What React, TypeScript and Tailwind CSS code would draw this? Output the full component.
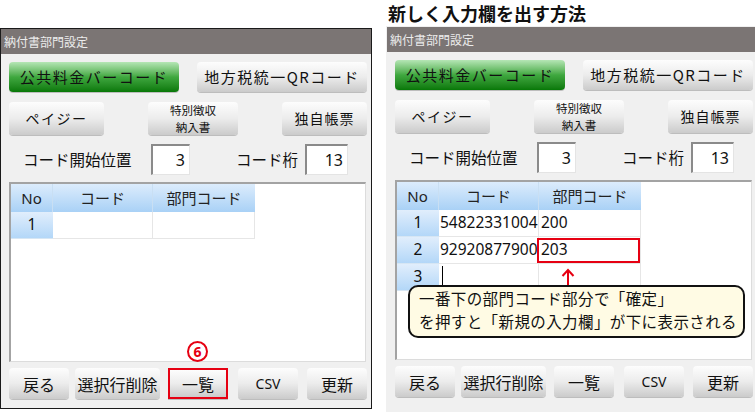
import React from 'react';

const jp = "font-['Noto_Sans_CJK_JP','Noto_Sans',sans-serif]";
const num = "font-['Noto_Sans','Noto_Sans_CJK_JP',sans-serif]";

type BtnProps = {
  children: React.ReactNode;
  className?: string;
  green?: boolean;
};

function Btn({ children, className = '', green = false }: BtnProps) {
  const tone = green
    ? 'bg-linear-to-b from-[#b5e6b5] via-[#3fa83f] to-[#067806]'
    : 'bg-linear-to-b from-[#fdfdfd] via-[#ececec] to-[#cbcbcb]';
  return (
    <div
      className={`flex items-center justify-center rounded-[4px] text-[#111] shadow-[0_1px_0_#bdbdbd] ${tone} ${className}`}
    >
      {children}
    </div>
  );
}

type Row = { code: string; dept: string };

function Grid({ rows, extra, overlay }: { rows: Row[]; extra?: boolean; overlay?: React.ReactNode }) {
  const head = 'bg-linear-to-b from-[#dcecfc] to-[#a9d1f6]';
  const numCell = 'bg-linear-to-b from-[#e1eefc] to-[#b3d7f8]';
  return (
    <div className="relative mt-[7px] ml-[8px] h-[180px] w-[357px] border-t-2 border-l-2 border-t-[#a3a3a3] border-l-[#a3a3a3] border-r border-b border-r-[#dcdcdc] border-b-[#dcdcdc] bg-white">
      <div className={`flex h-[28px] ${jp} text-[15px] text-[#222]`}>
        <div className={`flex w-[42px] items-center justify-center border-r border-[#c9dff3] ${head} ${num}`}>No</div>
        <div className={`flex w-[100px] items-center justify-center border-r border-[#c9dff3] ${head}`}>コード</div>
        <div className={`flex w-[102px] items-center justify-center ${head}`}>部門コード</div>
      </div>
      {rows.map((r, i) => (
        <div key={i} className={`flex h-[27px] ${num} text-[15.5px] text-[#111]`}>
          <div className={`flex w-[42px] items-center justify-center border-b border-[#d6e6f4] ${numCell}`}>{i + 1}</div>
          <div className="flex w-[100px] items-center border-r border-b border-[#e6e6e6] pl-[1px]">{r.code}</div>
          <div className="flex w-[102px] items-center border-r border-b border-[#e6e6e6] pl-[2px]">{r.dept}</div>
        </div>
      ))}
      {extra && (
        <div className={`flex h-[27px] ${num} text-[15.5px] text-[#111]`}>
          <div className={`flex w-[42px] items-center justify-center border-b border-[#d6e6f4] ${numCell}`}>{rows.length + 1}</div>
          <div className="flex w-[100px] items-center border-r border-b border-[#e6e6e6] pl-[3px]">
            <span className="h-[22px] w-px bg-black" />
          </div>
          <div className="w-[102px] border-r border-b border-[#e6e6e6]" />
        </div>
      )}
      {overlay}
    </div>
  );
}

function Panel({ framed, rows, extra, mark, overlay }: { framed?: boolean; rows: Row[]; extra?: boolean; mark?: boolean; overlay?: React.ReactNode }) {
  return (
    <div
      className={`relative flex h-[381px] w-[372px] shrink-0 flex-col bg-[#f0f0f0] ${jp} ${
        framed ? 'border border-[#1a1a1a]' : 'border border-transparent'
      }`}
    >
      <div className="flex h-[25px] items-center bg-[#7b7574] pl-[3px] text-[12px] text-[#ececec]">納付書部門設定</div>

      <div className="mt-[8px] flex h-[30px] pl-[8px]">
        <Btn green className="w-[170px] text-[15px] tracking-[1.5px]">公共料金バーコード</Btn>
        <Btn className="ml-[18px] w-[170px] text-[15px] tracking-[1.5px]">地方税統一QRコード</Btn>
      </div>

      <div className="mt-[10px] flex h-[33px] pl-[8px]">
        <Btn className="w-[95px] text-[14px] tracking-[1.5px]">ペイジー</Btn>
        <Btn className="ml-[44px] w-[90px] flex-col text-[11.5px] leading-[16.7px]">
          <span>特別徴収</span>
          <span>納入書</span>
        </Btn>
        <Btn className="ml-[44px] w-[85px] text-[14px] tracking-[1px]">独自帳票</Btn>
      </div>

      <div className="mt-[9px] flex h-[31px] items-center pl-[22px] text-[15.5px] text-[#111]">
        <span className="w-[128px]">コード開始位置</span>
        <div className={`flex h-[31px] w-[39px] items-center justify-end border-t-2 border-l-2 border-t-[#8a8a8a] border-l-[#8a8a8a] border-r border-b border-r-[#e4e4e4] border-b-[#e4e4e4] bg-white pr-[4px] ${num} text-[16px]`}>3</div>
        <span className="ml-[46px] w-[69px]">コード桁</span>
        <div className={`flex h-[31px] w-[43px] items-center justify-end border-t-2 border-l-2 border-t-[#8a8a8a] border-l-[#8a8a8a] border-r border-b border-r-[#e4e4e4] border-b-[#e4e4e4] bg-white pr-[4px] ${num} text-[16px]`}>13</div>
      </div>

      <Grid rows={rows} extra={extra} overlay={overlay} />

      <div className="mt-[6px] flex h-[31px] pl-[8px] text-[16px]">
        <Btn className="w-[60px]">戻る</Btn>
        <Btn className="ml-[6px] w-[85px]">選択行削除</Btn>
        <div className="relative ml-[8px]">
          <Btn className={`h-[31px] w-[60px] ${mark ? 'rounded-none border-2 border-[#e60012]' : ''}`}>一覧</Btn>
          {mark && (
            <span className={`absolute top-[-27px] left-[19px] flex h-[21px] w-[21px] items-center justify-center rounded-full border-[2.5px] border-[#e60012] bg-white text-[14px] leading-none font-bold text-[#e60012] ${num}`}>
              6
            </span>
          )}
        </div>
        <Btn className={`ml-[10px] w-[60px] text-[14px] ${num}`}>CSV</Btn>
        <Btn className="ml-[9px] w-[60px]">更新</Btn>
      </div>
    </div>
  );
}

export default function App() {
  const filled: Row[] = [
    { code: '54822331004', dept: '200' },
    { code: '92920877900', dept: '203' },
  ];

  const callout = (
    <>
      <div className="absolute top-[56px] left-[140px] h-[25px] w-[103px] border-2 border-[#e60012]" />
      <svg className="absolute top-[86px] left-[164px]" width="14" height="20" viewBox="0 0 14 20">
        <path d="M7 2 V20" stroke="#e60012" strokeWidth="2" />
        <path d="M1.5 8 L7 2 L12.5 8" fill="none" stroke="#e60012" strokeWidth="2" />
      </svg>
      <div className={`absolute top-[103px] left-[11px] h-[53px] w-[337px] rounded-[10px] border-2 border-[#111] bg-[#fffbe4] pl-[9px] text-[15.5px] leading-[22.5px] tracking-[0.4px] text-[#111] ${jp}`}>
        <div>一番下の部門コード部分で「確定」</div>
        <div>を押すと「新規の入力欄」が下に表示される</div>
      </div>
    </>
  );

  return (
    <div className="flex h-[412px] w-[755px] overflow-hidden bg-white">
      <div className="flex w-[386px] shrink-0 flex-col pt-[28px]">
        <Panel framed rows={[{ code: '', dept: '' }]} mark />
      </div>
      <div className="flex shrink-0 flex-col">
        <div className={`h-[28px] pl-[2px] text-[18px] leading-[26px] font-bold text-[#111] ${jp}`}>新しく入力欄を出す方法</div>
        <Panel rows={filled} extra overlay={callout} />
        <div className="h-[10px] w-[372px] bg-[#f0f0f0]" />
      </div>
    </div>
  );
}
